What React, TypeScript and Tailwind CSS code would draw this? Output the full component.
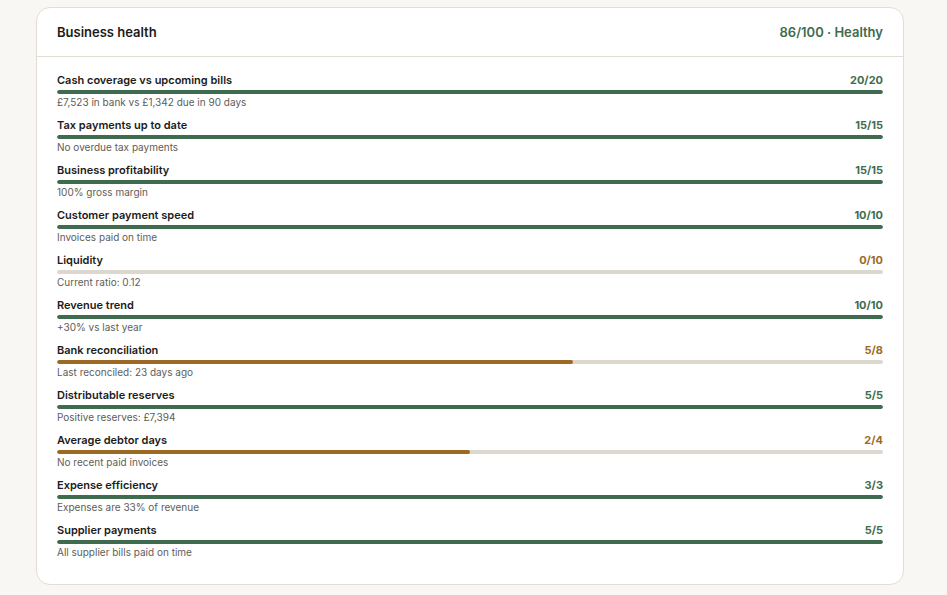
type Metric = {
  label: string;
  detail: string;
  score: number;
  max: number;
};

const metrics: Metric[] = [
  { label: "Cash coverage vs upcoming bills", detail: "£7,523 in bank vs £1,342 due in 90 days", score: 20, max: 20 },
  { label: "Tax payments up to date", detail: "No overdue tax payments", score: 15, max: 15 },
  { label: "Business profitability", detail: "100% gross margin", score: 15, max: 15 },
  { label: "Customer payment speed", detail: "Invoices paid on time", score: 10, max: 10 },
  { label: "Liquidity", detail: "Current ratio: 0.12", score: 0, max: 10 },
  { label: "Revenue trend", detail: "+30% vs last year", score: 10, max: 10 },
  { label: "Bank reconciliation", detail: "Last reconciled: 23 days ago", score: 5, max: 8 },
  { label: "Distributable reserves", detail: "Positive reserves: £7,394", score: 5, max: 5 },
  { label: "Average debtor days", detail: "No recent paid invoices", score: 2, max: 4 },
  { label: "Expense efficiency", detail: "Expenses are 33% of revenue", score: 3, max: 3 },
  { label: "Supplier payments", detail: "All supplier bills paid on time", score: 5, max: 5 },
];

function MetricRow({ m }: { m: Metric }) {
  const full = m.score === m.max;
  const pct = (m.score / m.max) * 100;
  return (
    <div>
      <div className="flex items-center justify-between h-4">
        <span className="text-[11px] font-semibold text-[#1c1b19] leading-4">{m.label}</span>
        <span
          className={
            full
              ? "text-[11px] font-bold text-[#3f6b4e] leading-4"
              : "text-[11px] font-bold text-[#9c6a22] leading-4"
          }
        >
          {m.score}/{m.max}
        </span>
      </div>
      <div className="mt-[2px] h-1 w-full rounded-full bg-[#dcd8ce] overflow-hidden">
        <div
          className={full ? "h-full rounded-full bg-[#3f6b4e]" : "h-full rounded-full bg-[#9c6a22]"}
          style={{ width: `${pct}%` }}
        />
      </div>
      <p className="mt-[1px] text-[10px] leading-[14px] text-[#605d58]">{m.detail}</p>
    </div>
  );
}

export default function App() {
  return (
    <div
      className="min-h-[595px] bg-[#f8f7f3] pt-[7px] pl-[36px]"
      style={{ fontFamily: "Inter, 'Noto Sans', sans-serif" }}
    >
      <div className="w-[868px] rounded-[14px] border border-[#e2ded6] bg-white">
        <div className="flex items-center justify-between px-5 pt-[2px] h-[49px] border-b border-[#e2ded6]">
          <h2 className="text-[13px] font-semibold text-[#1c1b19]">Business health</h2>
          <span className="text-[13px] font-semibold text-[#3f6b4e]">86/100 · Healthy</span>
        </div>
        <div className="px-5 pt-[15px] pb-[25px] flex flex-col gap-[8px]">
          {metrics.map((m) => (
            <MetricRow key={m.label} m={m} />
          ))}
        </div>
      </div>
    </div>
  );
}
